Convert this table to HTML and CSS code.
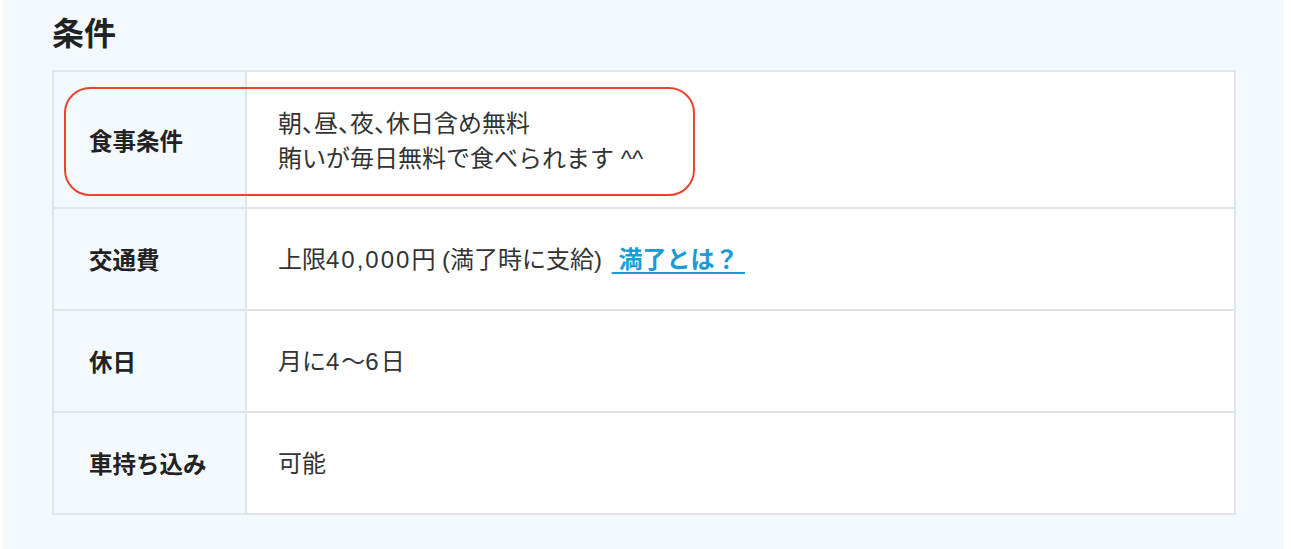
FILE: index.html
```html
<html>
    <head>
        <title>条件</title>
        <meta name="viewport" content="width=device-width" />
        <link rel="stylesheet" href="styles.css">
    </head>
    <body>
        <section class="panel">
            <h2 class="title">条件</h2>

            <div class="table-wrap">
                <table class="conditions">
                    <tr class="row-tall">
                        <th>食事条件</th>
                        <td>朝<span class="punct">、</span>昼<span class="punct">、</span>夜<span class="punct">、</span>休日含め無料<br />賄いが毎日無料で食べられます ^^</td>
                    </tr>
                    <tr>
                        <th>交通費</th>
                        <td>上限<span class="num">40,000</span>円 (満了時に支給) <a href="#" class="link">&nbsp;満了とは？&nbsp;</a></td>
                    </tr>
                    <tr>
                        <th>休日</th>
                        <td>月に<span class="num">4</span>〜<span class="num">6</span>日</td>
                    </tr>
                    <tr>
                        <th>車持ち込み</th>
                        <td>可能</td>
                    </tr>
                </table>
                <!-- hand drawn marker over the first row -->
                <div class="marker"></div>
            </div>
        </section>
    </body>
</html>
```

FILE: styles.css
```css
html, body {
    margin: 0;
    padding: 0;
    background: #fff;
}

body {
    font-family: "Liberation Sans", "Noto Sans CJK JP", sans-serif;
    color: #333;
}

.panel {
    margin-left: 3px;
    width: 1281px;
    height: 549px;
    box-sizing: border-box;
    padding: 0 48px 0 49px;
    background: #f4f9fd;
}

.title {
    margin: 0;
    padding-top: 8px;
    height: 70px;
    box-sizing: border-box;
    font-family: "Noto Sans CJK JP", sans-serif;
    font-size: 32px;
    line-height: 46px;
    font-weight: 700;
    color: #222;
}

.table-wrap {
    position: relative;
}

.conditions {
    width: 100%;
    border-collapse: collapse;
    border: 2px solid #e1e4e8;
}

.conditions th,
.conditions td {
    border: 2px solid #e1e4e8;
    height: 102px;
    vertical-align: middle;
    text-align: left;
}

.conditions th {
    width: 156px;
    padding: 0 0 0 35px;
    background: #f4f9fd;
    font-family: "Noto Sans CJK JP", sans-serif;
    font-size: 23.5px;
    font-weight: 700;
    color: #222;
}

.conditions td {
    padding: 0 0 0 31px;
    background: #fff;
    font-size: 24px;
    line-height: 35px;
    color: #333;
}

.conditions .row-tall th,
.conditions .row-tall td {
    height: 137px;
}

.punct {
    font-family: "Noto Sans CJK JP", sans-serif;
    font-feature-settings: "halt";
}

.num {
    letter-spacing: 2px;
}

.link {
    margin-left: 3px;
    color: #1a9ad7;
    font-weight: 700;
    text-decoration: underline;
    text-underline-offset: 4px;
}

.marker {
    position: absolute;
    left: 12px;
    top: 17px;
    width: 631px;
    height: 109px;
    box-sizing: border-box;
    border: 2px solid #e9442d;
    border-radius: 26px;
    pointer-events: none;
}
```
